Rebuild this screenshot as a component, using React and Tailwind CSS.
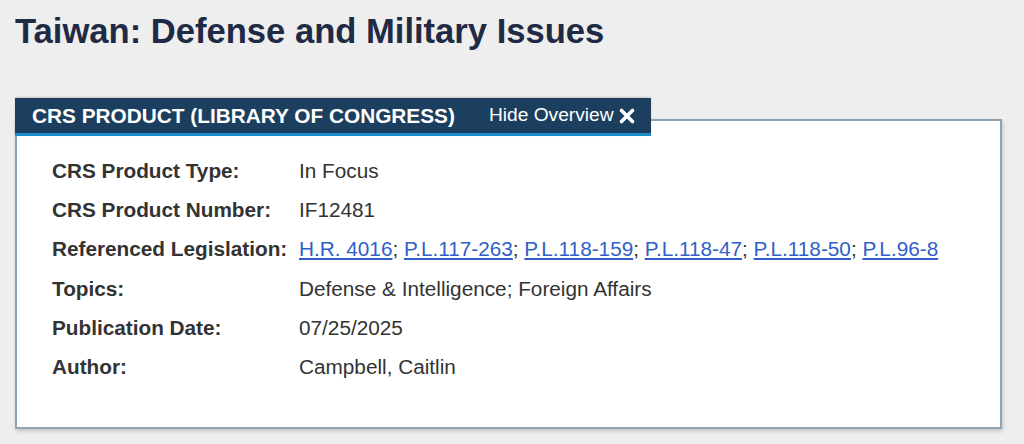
import React from "react";

const rows = [
  { label: "CRS Product Type:", value: "In Focus" },
  { label: "CRS Product Number:", value: "IF12481" },
  { label: "Referenced Legislation:", links: ["H.R. 4016", "P.L.117-263", "P.L.118-159", "P.L.118-47", "P.L.118-50", "P.L.96-8"] },
  { label: "Topics:", value: "Defense & Intelligence; Foreign Affairs" },
  { label: "Publication Date:", value: "07/25/2025" },
  { label: "Author:", value: "Campbell, Caitlin" },
];

export default function App() {
  return (
    <div
      className="min-h-[444px] w-[1024px] bg-[#eeeeee] pl-[15px] pr-[22px] pt-[11px]"
      style={{ fontFamily: '"Liberation Sans", Arial, sans-serif' }}
    >
      <h1 className="text-[34.6px] leading-[40px] font-bold text-[#1f2a45]">
        Taiwan: Defense and Military Issues
      </h1>

      <div className="mt-[47px]">
        <div className="relative z-10 inline-flex h-[38px] items-center bg-[#1c3f5f] border-b-[3px] border-[#1a8cc7] pl-[17px] pr-[16px] shadow-[0_-1px_2px_rgba(0,0,0,0.15)]">
          <span className="text-[20.8px] font-bold text-white">
            CRS PRODUCT (LIBRARY OF CONGRESS)
          </span>
          <span className="ml-[34px] text-[19.2px] text-white">Hide Overview</span>
          <svg className="ml-[5px]" width="16" height="16" viewBox="0 0 16 16">
            <path d="M2.5 2.5 L13.5 13.5 M13.5 2.5 L2.5 13.5" stroke="white" strokeWidth="3.6" strokeLinecap="round" />
          </svg>
        </div>

        <div className="-mt-[17px] border-[2.5px] border-[#8ea2b1] bg-white pl-[35px] pt-[30px] pb-[41px] shadow-[1px_2px_4px_rgba(0,0,0,0.18)]">
          {rows.map((r) => (
            <div key={r.label} className="flex h-[39.2px] items-center text-[20.75px] text-[#333333]">
              <div className="w-[247px] shrink-0 font-bold">{r.label}</div>
              <div>
                {r.links
                  ? r.links.map((l, i) => (
                      <React.Fragment key={l}>
                        <a href="#" className="text-[#2f5fc9] underline underline-offset-[2px]">
                          {l}
                        </a>
                        {i < r.links.length - 1 ? "; " : ""}
                      </React.Fragment>
                    ))
                  : r.value}
              </div>
            </div>
          ))}
        </div>
      </div>
    </div>
  );
}
